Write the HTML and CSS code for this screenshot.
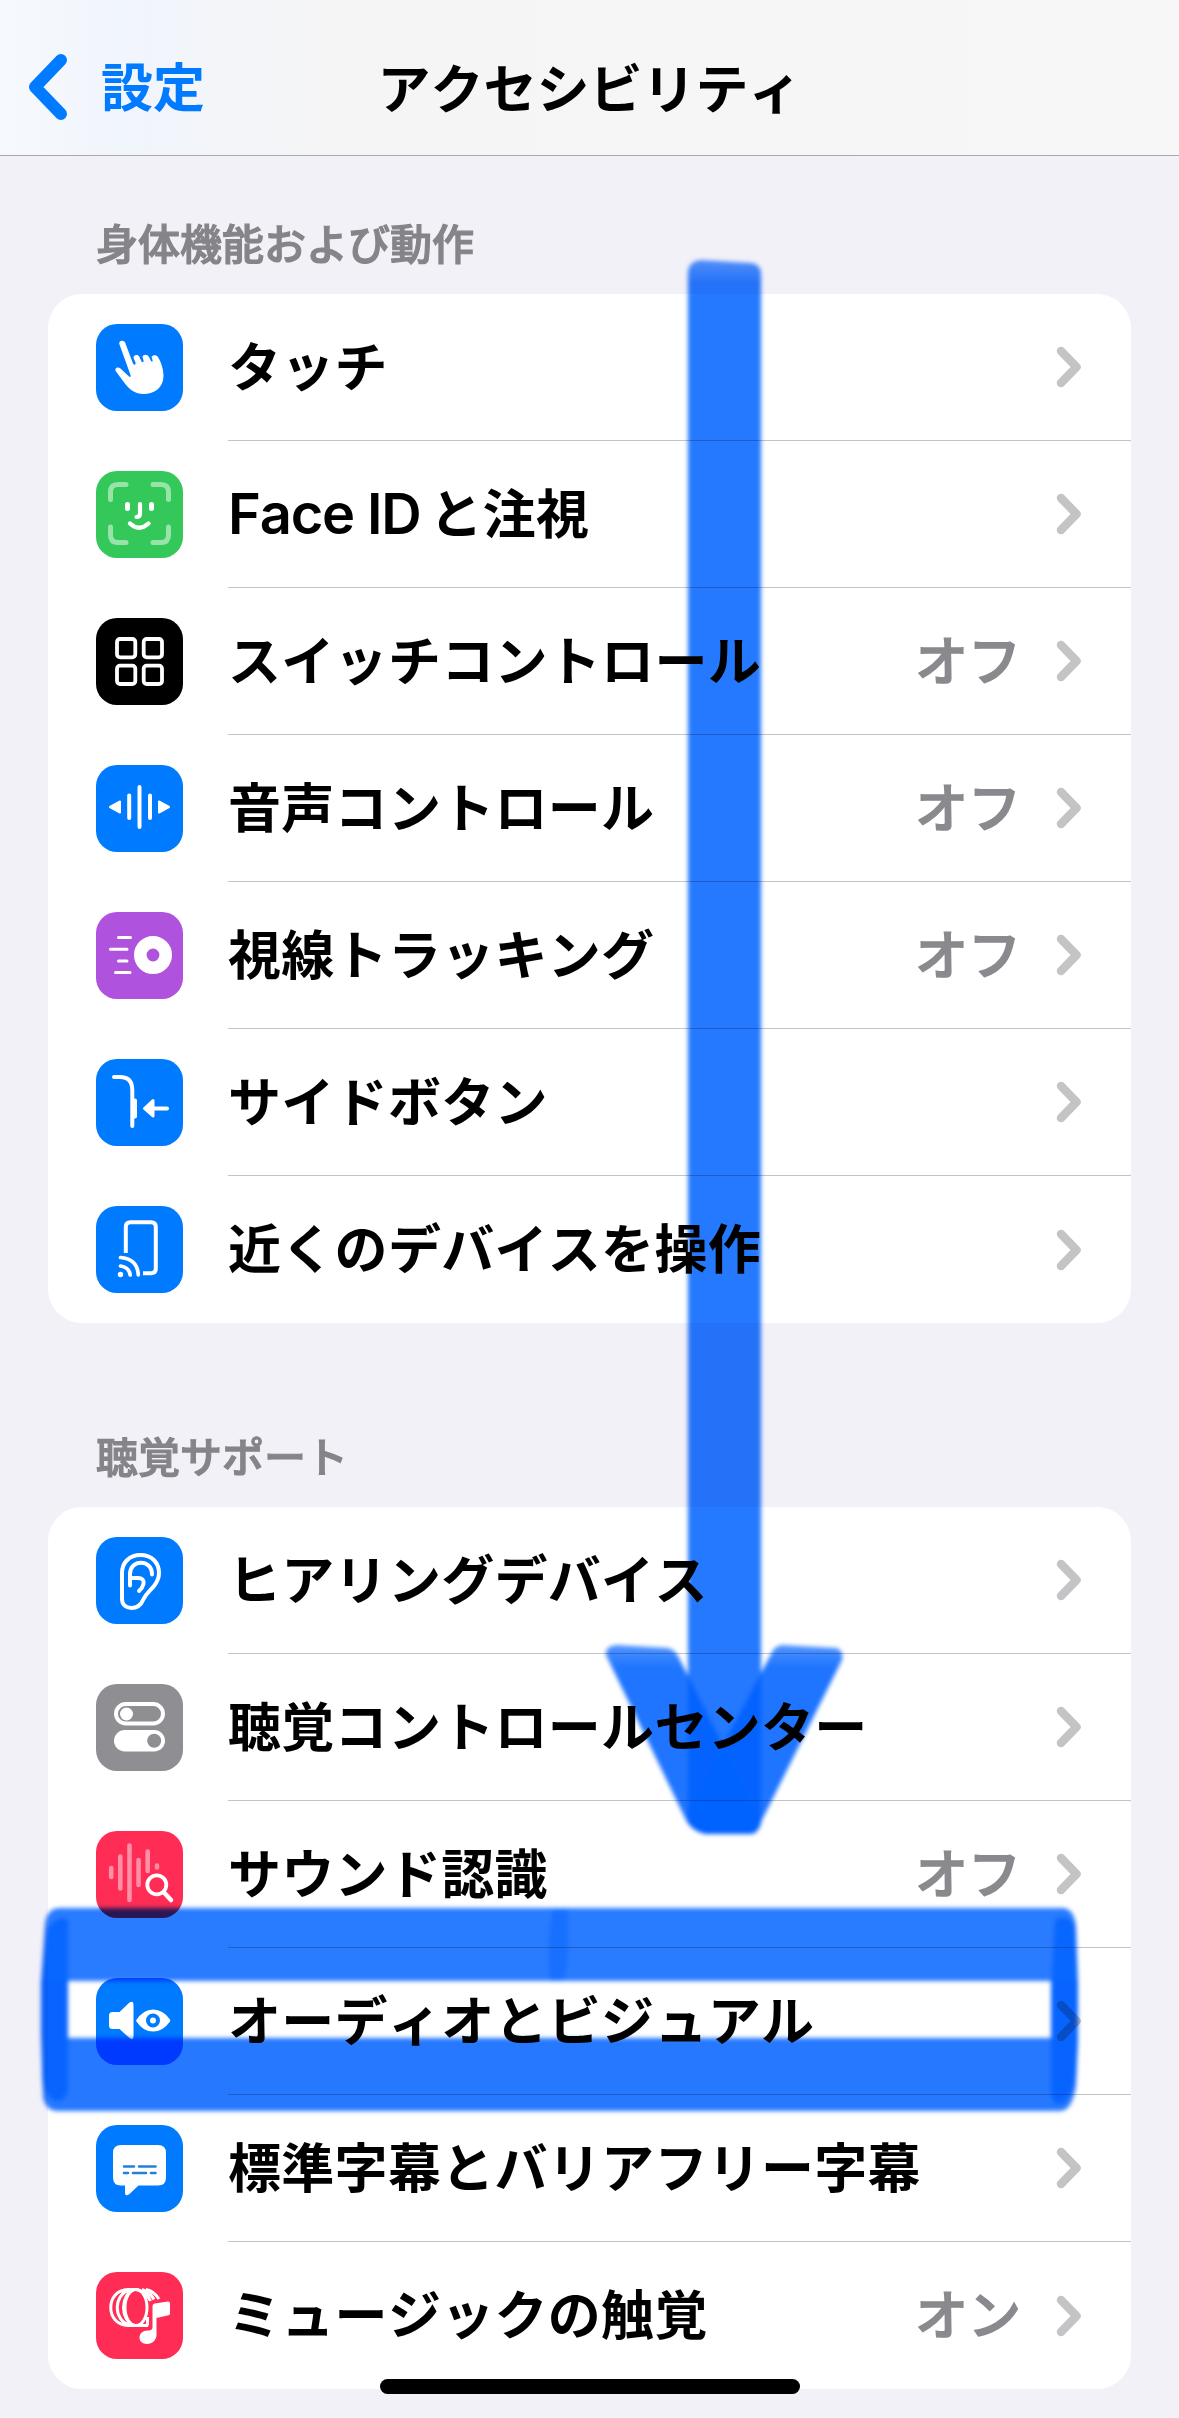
FILE: index.html
```
<!DOCTYPE html>
<html lang="ja">
  <head>
    <meta charset="utf-8" />
    <title>アクセシビリティ</title>
    <link rel="stylesheet" href="styles.css" />
  </head>
  <body>
    <svg class="defs" width="0" height="0">
      <symbol id="chevron" viewBox="0 0 26 42">
        <path d="M5 5 L20.5 21 L5 37" fill="none" stroke="#c4c4c6" stroke-width="8.5" stroke-linecap="round" stroke-linejoin="round" />
      </symbol>
    </svg>

    <header class="nav">
      <a class="back">
        <svg width="42" height="68" viewBox="0 0 42 68">
          <path d="M34 7 L8 34 L34 61" fill="none" stroke="#007aff" stroke-width="12" stroke-linecap="round" stroke-linejoin="round" />
        </svg>
        <span>設定</span>
      </a>
      <h1>アクセシビリティ</h1>
    </header>

    <main>
      <h2>身体機能および動作</h2>
      <ul class="list">
        <li>
          <svg class="icon blue" viewBox="0 0 87 87">
            <path fill="#fff" d="M23.5 20.5C22 16.5 28 15.500 29.300 19L37 39.500C38 41.500 40 41 39.500 38.500L37.500 34C37.500 30.500 42 30 43.500 33L45.500 37.500C46.500 39 48 38 47.500 36.500L46.500 33C47 30 51.500 30 53 33L55 37C56 38.500 57 37.500 56.500 36L55.500 33C57 30.500 60.500 31 62 33C65 38 67.500 45 67.500 52C67.500 63 59 70 47.500 70C38 70 32 64 27 57L20 47.500C18 44.500 21.500 42 24.500 44.500L33 52.500C34.500 53.500 35 53 34.500 51Z" />
          </svg>
          <div class="row"><span class="label">タッチ</span><svg class="chevron"><use href="#chevron" /></svg></div>
        </li>
        <li>
          <svg class="icon green" viewBox="0 0 87 87" fill="none" stroke-linecap="round">
            <path stroke="#97e4a8" stroke-width="5" d="M14.500 28.500V21Q14.500 13.500 22 13.500H30M57 13.500H65Q72.500 13.500 72.500 21V28.500M72.500 56V64Q72.500 71.500 65 71.500H57M30 71.500H22Q14.500 71.500 14.500 64V56" />
            <path stroke="#fff" stroke-width="5" d="M31.500 33.500V37.500M55.500 33.500V37.500" />
            <path stroke="#fff" stroke-width="4.200" d="M44 33V42.500Q44 46 40.500 46M34 52.500Q43 61 52.500 52.500" />
          </svg>
          <div class="row"><span class="label mixed"><span class="latin">Face ID</span>と注視</span><svg class="chevron"><use href="#chevron" /></svg></div>
        </li>
        <li>
          <svg class="icon black" viewBox="0 0 87 87" fill="none" stroke="#fff" stroke-width="3.800">
            <rect x="21" y="21" width="18.300" height="18.300" rx="3" />
            <rect x="47.700" y="21" width="18.300" height="18.300" rx="3" />
            <rect x="21" y="47.700" width="18.300" height="18.300" rx="3" />
            <rect x="47.700" y="47.700" width="18.300" height="18.300" rx="3" />
          </svg>
          <div class="row"><span class="label">スイッチコントロール</span><span class="value">オフ</span><svg class="chevron"><use href="#chevron" /></svg></div>
        </li>
        <li>
          <svg class="icon blue" viewBox="0 0 87 87" stroke="#fff" fill="#fff" stroke-linecap="round" stroke-linejoin="round">
            <path stroke-width="4" d="M33.200 30.500V53M43.500 22V62M54 30.500V53" />
            <path stroke-width="2" d="M14 42L24 36.500V47.500ZM73 42L63 36.500V47.500Z" />
          </svg>
          <div class="row"><span class="label">音声コントロール</span><span class="value">オフ</span><svg class="chevron"><use href="#chevron" /></svg></div>
        </li>
        <li>
          <svg class="icon purple" viewBox="0 0 87 87" fill="none" stroke="#fff" stroke-linecap="round">
            <circle cx="57" cy="43" r="12.700" stroke-width="12.600" />
            <path stroke-width="3" d="M22.500 25.500H34.500M14.500 37.300H31M22.500 49H31M19.500 60.500H34" />
          </svg>
          <div class="row"><span class="label">視線トラッキング</span><span class="value">オフ</span><svg class="chevron"><use href="#chevron" /></svg></div>
        </li>
        <li>
          <svg class="icon blue" viewBox="0 0 87 87" fill="none" stroke="#fff" stroke-width="4" stroke-linecap="round" stroke-linejoin="round">
            <path d="M18 18H24Q36.300 18 36.300 31V67M39 41.500V57.500M58 49.500H71" />
            <path fill="#fff" stroke-width="3" d="M48.500 49.500L57 41.500V57Z" />
          </svg>
          <div class="row"><span class="label">サイドボタン</span><svg class="chevron"><use href="#chevron" /></svg></div>
        </li>
        <li>
          <svg class="icon blue" viewBox="0 0 87 87" fill="none" stroke="#fff" stroke-width="4">
            <path d="M29.800 47V21Q29.800 16.300 34.500 16.300H55Q59.800 16.300 59.800 21V62.500Q59.800 67.200 55 67.200H47" />
            <path stroke-width="3.700" stroke-linecap="round" d="M24.500 51.500Q41.500 53 42.300 69M24.500 60Q33.500 61.500 34.200 69" />
            <circle cx="24.500" cy="68.500" r="2.700" fill="#fff" stroke="none" />
          </svg>
          <div class="row"><span class="label">近くのデバイスを操作</span><svg class="chevron"><use href="#chevron" /></svg></div>
        </li>
      </ul>

      <h2>聴覚サポート</h2>
      <ul class="list">
        <li>
          <svg class="icon blue" viewBox="0 0 87 87" fill="none" stroke="#fff" stroke-width="4" stroke-linecap="round">
            <path d="M44.500 18C33 18 26 26 26 36V62C26 68 30.500 71 35.500 71C41 71 44.500 69 47 63C50 56 54 54 58 49C61.500 44.500 63 40 63 36C63 26 56 18 44.500 18Z" />
            <path d="M56 37.500C56 21.500 34 22 34 37V48.500M34 41H42Q48.500 41 47.500 47Q46.500 51 43 54" />
          </svg>
          <div class="row"><span class="label">ヒアリングデバイス</span><svg class="chevron"><use href="#chevron" /></svg></div>
        </li>
        <li>
          <svg class="icon gray" viewBox="0 0 87 87">
            <rect x="20" y="20" width="47" height="19.500" rx="9.750" fill="none" stroke="#fff" stroke-width="4" />
            <circle cx="30.500" cy="30" r="6.500" fill="#fff" />
            <rect x="18" y="46" width="51" height="21.500" rx="10.750" fill="#fff" />
            <circle cx="58.200" cy="56.700" r="7" fill="#8e8e93" />
          </svg>
          <div class="row"><span class="label">聴覚コントロールセンター</span><svg class="chevron"><use href="#chevron" /></svg></div>
        </li>
        <li>
          <svg class="icon red" viewBox="0 0 87 87" fill="none" stroke-linecap="round">
            <path stroke="#ff8fa5" stroke-width="4.600" d="M15.200 37V46M24.300 25.500V57.500M33.500 14.500V69M42.600 29V54M51.700 20.500V40M61 34.500V36.500" />
            <circle cx="60.800" cy="53.800" r="13.500" fill="#ff2d55" />
            <circle cx="60.800" cy="53.800" r="9.500" stroke="#fff" stroke-width="3.800" />
            <path stroke="#fff" stroke-width="4.500" d="M68 61.500L75 69" />
          </svg>
          <div class="row"><span class="label">サウンド認識</span><span class="value">オフ</span><svg class="chevron"><use href="#chevron" /></svg></div>
        </li>
        <li>
          <svg class="icon blue" viewBox="0 0 87 87" fill="#fff">
            <path d="M16.500 34H23.500L33.500 24.500Q37.500 22 37.500 27V58Q37.500 63 33.500 60L23.500 51H16.500Q13 51 13 47.500V37.500Q13 34 16.500 34Z" />
            <path d="M40 42.500Q47 31.500 57 31.500Q67 31.500 74 41.500Q74.500 42.500 74 43.500Q67 53.500 57 53.500Q47 53.500 40.500 43.500Z" />
            <circle cx="57" cy="42.500" r="5" fill="#fff" stroke="#007aff" stroke-width="4" />
          </svg>
          <div class="row"><span class="label">オーディオとビジュアル</span><svg class="chevron"><use href="#chevron" /></svg></div>
        </li>
        <li>
          <svg class="icon blue" viewBox="0 0 87 87">
            <path fill="#fff" d="M25 20H62Q70 20 70 28V52.500Q70 60.500 62 60.500H42.500L33.500 69Q29 72 29 67.500V60.500H25Q17 60.500 17 52.500V28Q17 20 25 20Z" />
            <path stroke="#2380d8" stroke-width="2.600" stroke-linecap="round" d="M28 41.500H38M43 41.500H59.500M28 48H32M37 48H50M55 48H59.500" />
          </svg>
          <div class="row"><span class="label">標準字幕とバリアフリー字幕</span><svg class="chevron"><use href="#chevron" /></svg></div>
        </li>
        <li>
          <svg class="icon red" viewBox="0 0 87 87" fill="none" stroke="#fff">
            <g stroke-width="3">
              <ellipse cx="40" cy="35.500" rx="11" ry="18" />
              <path d="M40 17.500H32C9 18 9 53 32 53.500H52M34 17.500C17 23 17 48 34 53.500M38 17.500C24 23 24 48 38 53.500" />
              <path d="M40 17.500Q50 19 54.500 29M46 17.500Q54 20 58 27.500M50 17.500Q58 19 63 27" />
              <path d="M51.500 45V53.500" />
            </g>
            <path fill="#fff" stroke="none" d="M56.500 34Q56.500 32 58.500 31.500L72 29.500Q74 29.500 74 31.500V41.500Q74 43 72.500 43.300L60.500 46V63C60.500 68 56 72 51 72C46 72 43.500 69 43.500 65.500C43.500 61.500 47 58.500 51.500 58.500C54 58.500 56.500 58 56.500 55.500Z" />
          </svg>
          <div class="row"><span class="label">ミュージックの触覚</span><span class="value">オン</span><svg class="chevron"><use href="#chevron" /></svg></div>
        </li>
      </ul>
    </main>

    <!-- marker strokes: down arrow and box around the row -->
    <svg class="marker" viewBox="0 0 1179 2418">
      <defs>
        <filter id="soft" x="-10%" y="-10%" width="120%" height="120%">
          <feGaussianBlur stdDeviation="2.2" />
        </filter>
        <linearGradient id="tip" x1="0" y1="0" x2="0" y2="1">
          <stop offset="0" stop-color="#0062ff" stop-opacity="0.66" />
          <stop offset="0.015" stop-color="#0062ff" stop-opacity="0.86" />
        </linearGradient>
        <linearGradient id="arm" x1="0" y1="0" x2="0" y2="1">
          <stop offset="0" stop-color="#0062ff" stop-opacity="0.68" />
          <stop offset="0.12" stop-color="#0062ff" stop-opacity="0.88" />
        </linearGradient>
      </defs>
      <g filter="url(#soft)">
        <path fill="url(#tip)" d="M688 272Q689 261 701 260L751 263Q761 264 761 274V1824Q758 1834 750 1834H707Q691 1832 688 1820Z" />
        <path fill="url(#arm)" d="M606 1655Q605 1646 616 1645L668 1648Q675 1650 678 1656L760 1818Q758 1834 749 1834H706Q692 1830 687 1822Z" />
        <path fill="url(#arm)" d="M842 1660Q844 1650 836 1648L782 1645Q774 1646 771 1654L688 1812Q690 1830 706 1834H749Q757 1834 761 1822Z" />
        <path fill="#0062ff" fill-opacity="0.84" d="M60 1908H1062Q1074 1908 1076 1926L1078 1981H41L45 1924Q47 1908 60 1908Z" />
        <path fill="#0062ff" fill-opacity="0.85" d="M41 2038H1078L1076 2086Q1072 2111 1060 2111H58Q45 2111 43 2096Z" />
        <path fill="#0062ff" fill-opacity="0.8" d="M47 1930Q58 1914 68 1920V2090Q64 2104 54 2100Q44 2094 42 2076V2038H41V1981H42Z" />
        <path fill="#0062ff" fill-opacity="0.8" d="M1055 1920Q1068 1912 1075 1928L1077 1981H1078V2038L1076 2076Q1070 2102 1060 2104Q1051 2104 1051 2090V1990Z" />
        <rect x="41" y="1981" width="27" height="57" fill="#0062ff" fill-opacity="0.85" />
        <rect x="1051" y="1981" width="27" height="57" fill="#0062ff" fill-opacity="0.85" />
        <path fill="#0062ff" fill-opacity="0.45" d="M553 1909H567Q570 1950 564 1981H550Q547 1940 553 1909Z" />
      </g>
    </svg>

    <div class="home-indicator"></div>
  </body>
</html>
```
FILE: styles.css
```
* {
  box-sizing: border-box;
}
body {
  position: relative;
  width: 1179px;
  height: 2418px;
  margin: 0;
  overflow: hidden;
  background: #f2f1f8;
  color: #000;
  font-family: "Noto Sans CJK JP", sans-serif;
  font-size: 53px;
  font-weight: 600;
  font-kerning: none;
  line-height: 1;
}
.defs {
  position: absolute;
}
.nav {
  display: grid;
  grid-template-columns: 1fr auto 1fr;
  align-items: center;
  height: 156px;
  padding: 18px 27px 0;
  background: linear-gradient(90deg, #f6f9fd 0, #f1f5fc 130px, #f5f5f6 330px, #f7f7f8 100%);
  border-bottom: 1px solid #a9a9ad;
}
.nav::after {
  content: "";
}
.nav h1 {
  margin: 0;
  font-size: 53px;
  font-weight: 700;
}
.back {
  display: flex;
  align-items: center;
  gap: 32px;
  color: #007aff;
  font-size: 52px;
}
.back span {
  padding-bottom: 4px;
}
h2 {
  height: 138px;
  margin: 0;
  padding: 65px 0 0 96px;
  color: #858589;
  font-size: 42px;
  font-weight: 500;
  line-height: 42px;
  -webkit-text-stroke: 1.2px #858589;
}
.list + h2 {
  height: 184px;
  padding-top: 111px;
}
.list {
  margin: 0 48px;
  padding: 0;
  list-style: none;
  background: #fff;
  border-radius: 34px;
}
.list li {
  display: flex;
  align-items: center;
  height: 147px;
  padding-left: 48px;
}
.icon {
  flex: none;
  width: 87px;
  height: 87px;
  margin-right: 45px;
  border-radius: 21px;
}
.blue {
  background: #007aff;
}
.green {
  background: #34c759;
}
.black {
  background: #000;
}
.purple {
  background: #af52de;
}
.gray {
  background: #8e8e93;
}
.red {
  background: #ff2d55;
}
.row {
  display: flex;
  flex: 1;
  align-items: center;
  height: 147px;
  padding-right: 49px;
  border-bottom: 1px solid #c4c4c7;
}
li:last-child .row {
  border-bottom: none;
}
.label {
  flex: 1;
  padding-bottom: 6px;
  letter-spacing: 0.3px;
  white-space: nowrap;
}
.mixed {
  padding-bottom: 2px;
}
.latin {
  margin-right: 9px;
  font-family: Inter, sans-serif;
  font-size: 56px;
  letter-spacing: -1.2px;
  line-height: 1;
}
.value {
  margin-right: 35px;
  padding-bottom: 6px;
  color: #8a8a8e;
  font-weight: 500;
  -webkit-text-stroke: 1.5px #8a8a8e;
}
.chevron {
  width: 26px;
  height: 42px;
}
.marker {
  position: absolute;
  top: 0;
  left: 0;
  width: 1179px;
  height: 2418px;
  mix-blend-mode: multiply;
}
.home-indicator {
  position: absolute;
  bottom: 24px;
  left: 380px;
  width: 420px;
  height: 15px;
  border-radius: 8px;
  background: #000;
}
```
